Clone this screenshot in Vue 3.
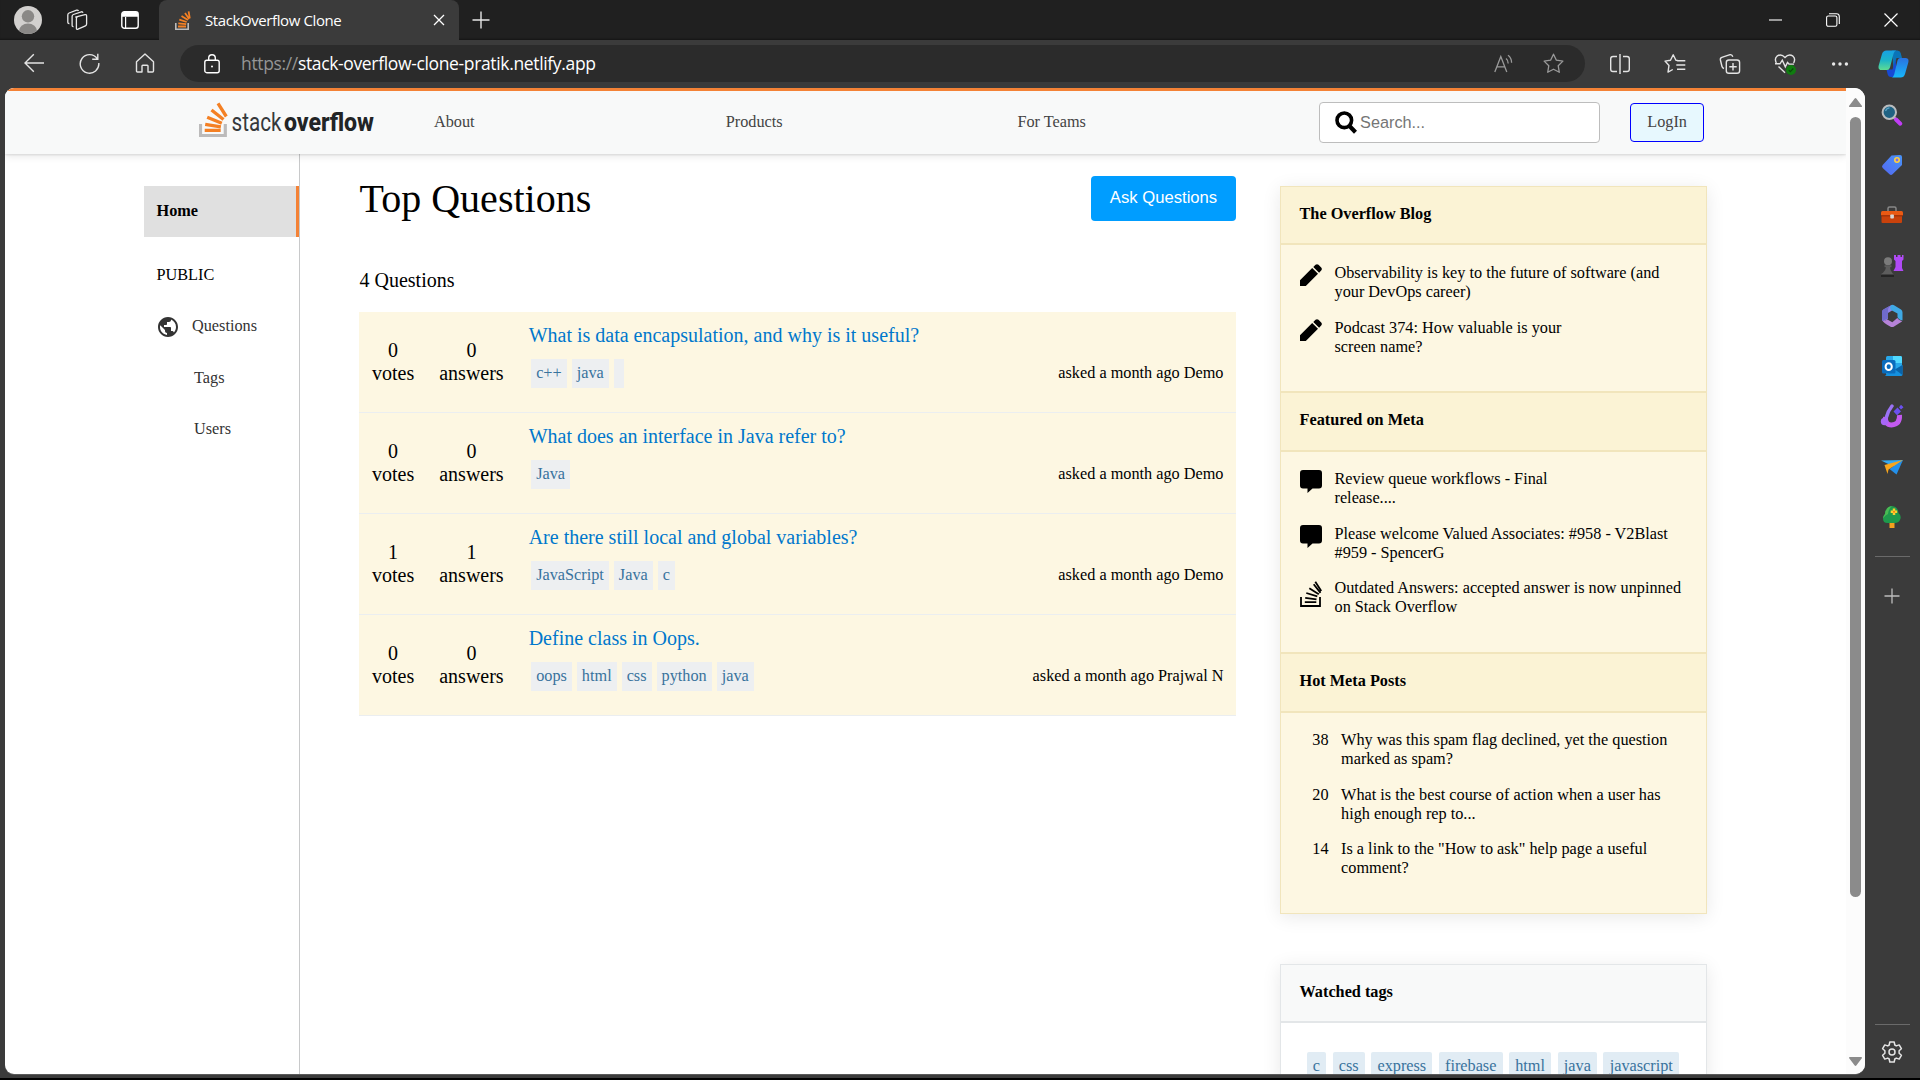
<script setup>
const navLinks = ['About', 'Products', 'For Teams']

const questions = [
  { votes: 0, answers: 0, title: 'What is data encapsulation, and why is it useful?', tags: ['c++', 'java', ''], by: 'Demo' },
  { votes: 0, answers: 0, title: 'What does an interface in Java refer to?', tags: ['Java'], by: 'Demo' },
  { votes: 1, answers: 1, title: 'Are there still local and global variables?', tags: ['JavaScript', 'Java', 'c'], by: 'Demo' },
  { votes: 0, answers: 0, title: 'Define class in Oops.', tags: ['oops', 'html', 'css', 'python', 'java'], by: 'Prajwal N' },
]

const widgets = [
  {
    title: 'The Overflow Blog',
    items: [
      { icon: 'pen', text: 'Observability is key to the future of software (and\nyour DevOps career)' },
      { icon: 'pen', text: 'Podcast 374: How valuable is your\nscreen name?' },
    ],
  },
  {
    title: 'Featured on Meta',
    items: [
      { icon: 'comment', text: 'Review queue workflows - Final\nrelease....' },
      { icon: 'comment', text: 'Please welcome Valued Associates: #958 - V2Blast\n#959 - SpencerG' },
      { icon: 'stack', text: 'Outdated Answers: accepted answer is now unpinned\non Stack Overflow' },
    ],
  },
  {
    title: 'Hot Meta Posts',
    items: [
      { count: 38, text: 'Why was this spam flag declined, yet the question\nmarked as spam?' },
      { count: 20, text: 'What is the best course of action when a user has\nhigh enough rep to...' },
      { count: 14, text: 'Is a link to the "How to ask" help page a useful\ncomment?' },
    ],
  },
]

const watched = ['c', 'css', 'express', 'firebase', 'html', 'java', 'javascript']
</script>

<template>
  <div class="browser">
    <header class="tabbar">
      <svg class="avatar" width="28" height="28" viewBox="0 0 28 28">
        <clipPath id="face"><circle cx="14" cy="14" r="14" /></clipPath>
        <g clip-path="url(#face)">
          <rect width="28" height="28" fill="#d2d0ce" />
          <circle cx="14" cy="10.3" r="6.2" fill="#8a8886" />
          <ellipse cx="14" cy="25" rx="9" ry="7.5" fill="#8a8886" />
        </g>
      </svg>
      <svg class="workspaces" width="22" height="22" viewBox="0 0 22 22" fill="none" stroke="#e8e8e8" stroke-width="1.3">
        <path d="M9.3 8.2 19 5.6q1.6-.3 1.6 1.3v8.2q0 1.200-1.200 1.700l-7.400 3.400q-1.600.6-1.600-1V9.800q0-1.200.9-1.600z" />
        <path d="M7.500 17.500q-1.400.3-1.400-1.300V7.500q0-1.500 1.300-2l7.900-2.700q1.300-.3 1.700 1" />
        <path d="M3.400 14.500q-1.600.2-1.600-1.400V6q0-1.400 1.300-2l7.500-2.800q1.300-.4 1.900.8" />
      </svg>
      <svg class="tabaction" width="18" height="18" viewBox="0 0 18 18" fill="none">
        <rect x=".8" y=".8" width="16.400" height="16.400" rx="2.500" stroke="#fff" stroke-width="1.400" />
        <path d="M1 5.800V3q0-2 2-2h12q2 0 2 2v2.800z" fill="#fff" />
        <path d="M4.600 6v11" stroke="#fff" stroke-width="1.200" />
      </svg>
      <div class="tab">
        <svg width="16" height="19" viewBox="0 0 16 19" fill="none">
          <path d="M.8 12v6.200h12.400V12" stroke="#bcbbbb" stroke-width="1.600" />
          <path d="M3 15.500h8M3.300 12.300l7.900.9M4.300 8.700l7.400 2.300M6.500 5l6.400 4M10 2l4.200 6M13.600.4l1.200 7" stroke="#f48024" stroke-width="1.800" />
        </svg>
        <span class="tab-title">StackOverflow Clone</span>
        <svg class="tab-close" width="12" height="12" viewBox="0 0 12 12"><path d="M1 1l10 10M11 1L1 11" stroke="#fff" stroke-width="1.300" /></svg>
      </div>
      <svg class="newtab" width="18" height="18" viewBox="0 0 18 18"><path d="M9 .5v17M.5 9h17" stroke="#e6e6e6" stroke-width="1.400" /></svg>
      <div class="window-buttons">
        <svg width="13" height="14" viewBox="0 0 13 14"><path d="M0 7h13" stroke="#fff" stroke-width="1.100" /></svg>
        <svg width="14" height="14" viewBox="0 0 14 14" fill="none" stroke="#fff" stroke-width="1.100"><rect x=".6" y="3" width="10.300" height="10.300" rx="1.600" /><path d="M3 .7h7.500q2.800 0 2.800 2.800v7.500" /></svg>
        <svg width="14" height="14" viewBox="0 0 14 14"><path d="M.5.500l13 13M13.500.500l-13 13" stroke="#fff" stroke-width="1.200" /></svg>
      </div>
    </header>

    <div class="toolbar">
      <svg width="20" height="20" viewBox="0 0 20 20" fill="none" stroke="#e4e4e4" stroke-width="1.400"><path d="M20 10H1M9.800 1.200 1 10l8.800 8.800" /></svg>
      <svg width="21" height="21" viewBox="0 0 21 21" fill="none" stroke="#e4e4e4" stroke-width="1.400"><path d="M18.300 5.800A9.300 9.300 0 1 0 19.800 10M18.800.8v5.400h-5.600" /></svg>
      <svg width="20" height="20" viewBox="0 0 20 20" fill="none" stroke="#e4e4e4" stroke-width="1.400" stroke-linejoin="round"><path d="M1.500 8.700 10 1l8.500 7.700V18q0 1-1 1H13v-6q0-.8-.8-.8H7.800q-.8 0-.8.800v6H2.500q-1 0-1-1z" /></svg>
      <div class="address">
        <svg width="16" height="20" viewBox="0 0 16 20" fill="none" stroke="#fff" stroke-width="1.400"><rect x=".8" y="6.300" width="14.400" height="12.400" rx="2" /><path d="M4.700 6V4a3.300 3.300 0 0 1 6.600 0v2" /><circle cx="8" cy="12.500" r="1" fill="#fff" stroke="none" /></svg>
        <span class="url"><span class="scheme">https://</span>stack-overflow-clone-pratik.netlify.app</span>
        <svg class="aloud" width="20" height="20" viewBox="0 0 20 20" fill="none" stroke="#9a9a9a" stroke-width="1.300"><path d="M.8 18 6.800 2.500 12.800 18M2.800 12.800h8M12 4.500q2.200 1.700 2.200 5M14 1.200q3.600 2.600 3.600 7.500" /></svg>
        <svg width="21" height="21" viewBox="0 0 21 21" fill="none" stroke="#9a9a9a" stroke-width="1.300" stroke-linejoin="round"><path d="M10.500 1.200l2.900 6 6.500.9-4.700 4.600 1.100 6.600-5.800-3.100-5.800 3.100 1.100-6.600L1.100 8.100l6.500-.9z" /></svg>
      </div>
      <div class="tools">
        <svg width="22" height="22" viewBox="0 0 22 22" fill="none" stroke="#e4e4e4" stroke-width="1.400"><path d="M8 3.500H4q-2.300 0-2.300 2.300v10.400q0 2.300 2.300 2.300h4M14 3.500h4q2.300 0 2.300 2.300v10.400q0 2.300-2.300 2.300h-4M11 1v20" /></svg>
        <svg width="22" height="22" viewBox="0 0 22 22" fill="none" stroke="#e4e4e4" stroke-width="1.400" stroke-linejoin="round"><path d="M14.200 7.600l-2.300-.4-2.700-5.400-2.700 5.400-5.500.9 4 4.300-1 6.700 4.800-2.600M13 7.700h8.300M12.300 12h9M13 16.300h8.300" /></svg>
        <svg width="22" height="22" viewBox="0 0 22 22" fill="none" stroke="#e4e4e4" stroke-width="1.400"><path d="M5 15.500Q3.400 15 3 13.500L1.400 7q-.4-2 1.400-2.600L11 1.700q2.100-.4 2.800 2" /><rect x="7.300" y="7" width="13.300" height="13.300" rx="2.600" /><path d="M14 10v7.400M10.300 13.700h7.400" /></svg>
        <svg width="22" height="22" viewBox="0 0 22 22" fill="none" stroke="#e4e4e4" stroke-width="1.400"><path d="M2.300 10Q.2 5.500 3 3.200q4.200-2.800 8 1.300 3.800-4.100 8-1.300 2.800 2.300.7 6.800M1 10.800h5l2.300-3.600 3 6.600 2.200-4.300 1.500 1.600h5M4.500 13.500l6.500 6.300" /><circle cx="17" cy="17" r="5" fill="#107c10" stroke="none" /><path d="M14.800 17.200l1.500 1.500 3-3.200" stroke="#0a4a0a" stroke-width="1.200" /></svg>
        <svg width="22" height="22" viewBox="0 0 22 22" fill="#e8e8e8"><circle cx="4.600" cy="11" r="1.700" /><circle cx="11" cy="11" r="1.700" /><circle cx="17.400" cy="11" r="1.700" /></svg>
      </div>
      <svg class="copilot" width="31" height="28" viewBox="0 0 31 28">
        <defs>
          <linearGradient id="cp1" x1="0" y1="0" x2="0" y2="1"><stop offset="0" stop-color="#18a0e4" /><stop offset=".5" stop-color="#1cb4c8" /><stop offset="1" stop-color="#5edc92" /></linearGradient>
          <linearGradient id="cp2" x1="0" y1="0" x2="0" y2="1"><stop offset="0" stop-color="#2a72e0" /><stop offset="1" stop-color="#17b7fb" /></linearGradient>
        </defs>
        <path d="M14 .5h5.500q2.500 0 3.200 2.500l1.300 5h-5.500l-3 11.500z" fill="#0a74b8" />
        <path d="M8.500 19.500h6l3-10L19 27h-6q-2.600 0-3.300-2.500z" fill="#1749d4" />
        <path d="M8.500.5h9.800q-2 .5-2.700 3L12 17.500q-.8 2.500-3 2.500H3.500Q-.3 20 .7 15.500L4 4Q5 .5 8.500.5z" fill="url(#cp1)" />
        <path d="M22 8h5.500q3.800 0 2.800 4.500L27 24q-1 3.500-4.500 3.500h-9q2-.5 2.700-3L19.500 10.500Q20.200 8 22 8z" fill="url(#cp2)" />
      </svg>
    </div>

    <div class="middle">
      <div class="viewport">
        <div class="site">
          <nav class="nav">
            <svg class="logo" width="180" height="38" viewBox="0 0 180 38">
              <path d="M1.500 23v11.500h24.800V23" fill="none" stroke="#bcbbbb" stroke-width="3.200" />
              <path d="M5.700 29.300h16M6.200 23.300l15.700 2.500M8.200 16.200l14.600 6.100M12.500 9l12 9.500M19 2.300l8.300 13.200" fill="none" stroke="#f48024" stroke-width="3.300" />
              <text x="32.500" y="30" class="word" textLength="50" lengthAdjust="spacingAndGlyphs">stack</text>
              <text x="85" y="30" class="word strong" textLength="90" lengthAdjust="spacingAndGlyphs">overflow</text>
            </svg>
            <div class="links"><a v-for="l in navLinks" :key="l">{{ l }}</a></div>
            <div class="search">
              <svg width="22" height="23" viewBox="0 0 22 23" fill="none" stroke="#000"><circle cx="9.300" cy="9.300" r="7.300" stroke-width="3.600" /><path d="M14.500 15l6 6.200" stroke-width="4.200" /></svg>
              <span>Search...</span>
            </div>
            <a class="login">LogIn</a>
          </nav>

          <div class="body">
            <aside class="left">
              <a class="home">Home</a>
              <span class="public">PUBLIC</span>
              <a class="side-link with-icon">
                <svg width="24" height="24" viewBox="0 0 24 24" fill="#333"><path d="M12 2C6.480 2 2 6.480 2 12s4.480 10 10 10 10-4.480 10-10S17.520 2 12 2zm-1 17.930c-3.950-.49-7-3.850-7-7.930 0-.62.08-1.210.21-1.790L9 15v1c0 1.100.9 2 2 2v1.930zm6.900-2.540c-.26-.81-1-1.390-1.900-1.390h-1v-3c0-.55-.45-1-1-1H8v-2h2c.55 0 1-.45 1-1V7h2c1.100 0 2-.9 2-2v-.41c2.930 1.190 5 4.060 5 7.410 0 2.080-.8 3.970-2.100 5.390z" /></svg>
                Questions
              </a>
              <a class="side-link">Tags</a>
              <a class="side-link">Users</a>
            </aside>

            <main class="main">
              <div class="heading">
                <h1>Top Questions</h1>
                <button>Ask Questions</button>
              </div>
              <p class="count">4 Questions</p>
              <div class="list">
                <article v-for="q in questions" :key="q.title" class="question">
                  <div class="stat"><span>{{ q.votes }}</span><span>votes</span></div>
                  <div class="stat"><span>{{ q.answers }}</span><span>answers</span></div>
                  <div class="details">
                    <a class="title">{{ q.title }}</a>
                    <div class="meta">
                      <div class="tags"><span v-for="(t, i) in q.tags" :key="i" class="tag">{{ t }}</span></div>
                      <span class="asked">asked a month ago {{ q.by }}</span>
                    </div>
                  </div>
                </article>
              </div>
            </main>

            <aside class="right">
              <section class="widget">
                <template v-for="w in widgets" :key="w.title">
                  <h4>{{ w.title }}</h4>
                  <div class="items">
                    <div v-for="it in w.items" :key="it.text" class="item" :class="{ hot: it.count }">
                      <svg v-if="it.icon === 'pen'" width="22" height="22" viewBox="0 0 22 22"><path d="M0 22v-5.800L12.200 4l5.800 5.800L5.800 22zM13.300 2.900 15.500.8q1.500-1.300 3 0l2.700 2.700q1.300 1.500 0 3L19.100 8.700z" /></svg>
                      <svg v-else-if="it.icon === 'comment'" width="22" height="23" viewBox="0 0 22 23"><path d="M3 0h16q3 0 3 3v12.500q0 3-3 3h-6.500L7.500 23v-4.500H3q-3 0-3-3V3q0-3 3-3z" /></svg>
                      <svg v-else-if="it.icon === 'stack'" class="stack" width="22" height="26" viewBox="0 0 22 26" fill="none" stroke="#000" stroke-width="1.800"><path d="M1 16v9h19v-9M4.800 21.200h11.500M5.200 16.800l11.300 1.500M6.300 12l11 3.300M9.300 7.200l9.500 6M13.700 3.200l6.800 8.700M15.300.7l6 9.300" /></svg>
                      <span v-else class="num">{{ it.count }}</span>
                      <p>{{ it.text }}</p>
                    </div>
                  </div>
                </template>
              </section>
              <section class="widget watched">
                <h4>Watched tags</h4>
                <div class="watched-tags"><span v-for="t in watched" :key="t">{{ t }}</span></div>
              </section>
            </aside>
          </div>
        </div>
        <div class="scrollbar">
          <svg width="13" height="9" viewBox="0 0 13 9"><path d="M6.500 0q.5 0 1 .8L13 8q.2 1-1 1H1Q-.2 9 0 8L5.500.8q.5-.8 1-.8z" fill="#8b8b8b" /></svg>
          <div class="thumb"></div>
          <svg width="13" height="9" viewBox="0 0 13 9"><path d="M6.500 9q.5 0 1-.8L13 1q.2-1-1-1H1Q-.2 0 0 1l5.500 7.200q.5.8 1 .8z" fill="#8b8b8b" /></svg>
        </div>
      </div>

      <div class="edgebar">
        <svg width="24" height="24" viewBox="0 0 24 24"><path d="M13.500 14l4 4" stroke="#aaa" stroke-width="3" /><circle cx="9.300" cy="9.300" r="6.700" fill="#1f6283" stroke="#b9bcbf" stroke-width="2" /><path d="M5.500 8q1-3 4-3.200" stroke="#5ba3c5" fill="none" stroke-width="1.300" /><path d="M16 16.500l4.300 4.200" stroke="#c03cf5" stroke-width="4" stroke-linecap="round" /></svg>
        <svg width="24" height="24" viewBox="0 0 24 24"><defs><linearGradient id="tg" x1="1" y1="0" x2="0" y2="1"><stop offset="0" stop-color="#4894f8" /><stop offset="1" stop-color="#5468f0" /></linearGradient></defs><path d="M11.500 2.500 20 2q2 0 2 2v8l-9.500 9.300q-1.500 1.300-3 0L2.700 15q-1.400-1.500 0-3z" fill="url(#tg)" /><circle cx="17" cy="7" r="2.200" fill="#7b6cf0" stroke="#ffd23c" stroke-width="1.600" /></svg>
        <svg width="24" height="24" viewBox="0 0 24 24"><path d="M8 8V5.500Q8 4 9.500 4h5Q16 4 16 5.500V8" stroke="#888" stroke-width="1.500" fill="none" /><rect x="1.500" y="10" width="20.500" height="10" rx="1" fill="#c9420c" /><path d="M2.500 8h19q1.500 0 1.500 1.500v3.300H1V9.500Q1 8 2.500 8z" fill="#ea5a14" /><path d="M1 12.800h22" stroke="#8d2a06" /><rect x="10.300" y="11.500" width="3.600" height="4" rx=".8" fill="#d7d7d7" /></svg>
        <svg width="24" height="24" viewBox="0 0 24 24"><path d="M14 2h2v2h1.500V2h3v2H22V2h1.500v4.500L22 8v7l1.500 3H13.500L15.500 14V8L14 6.500z" fill="#b04af5" /><circle cx="8" cy="8.300" r="4" fill="#7b7b7b" /><path d="M4.500 12.200h7v2H10q0 3 2.500 6l1.500 1v2.300H1V21l1.800-1Q5.700 17.500 6 14.200H4.500z" fill="#5d5d5d" /><path d="M1 21.500h13V24H1z" fill="#242424" /></svg>
        <svg width="24" height="24" viewBox="0 0 24 24"><path d="M11.500 1 3.500 5.500Q2 6.500 2 8.500v8q4 1.500 6-2V9l6.500-4z" fill="#8f82e6" /><path d="M11.500 1q1.500-.5 3 .5l6.500 4q1.500 1 1.500 3v8q-4-1-5-3.500V9.500L11 6q-2-3 .5-5z" fill="#3fa9e5" /><path d="M2.300 16.500q2 1 5-1l5 2.800 5-4.300q1 2 4.800 3.300-1 1-8 5.200-2 1-4 0Q3.500 19 2.300 16.500z" fill="#b683d9" /><path d="M11.500 1Q8 3 8 6.500v8L2.300 17Q1.800 14 2 8q0-2 1.700-2.800z" fill="#6f6bcb" /></svg>
        <svg width="24" height="24" viewBox="0 0 24 24"><rect x="6" y="2" width="16" height="19" rx="1.500" fill="#28a8ea" /><path d="M13 2h7.500Q22 2 22 3.500V9h-9z" fill="#50d9ff" /><path d="M5 21.500 22.500 11v9.500q0 1.500-1.500 1.500H6z" fill="#1490df" /><path d="M22.500 11v10L15 15.500z" fill="#0a63a8" /><rect x="2" y="6" width="13.500" height="13.500" rx="1.500" fill="#0a6cbd" /><ellipse cx="8.700" cy="12.700" rx="3.100" ry="3.400" fill="none" stroke="#fff" stroke-width="2" /></svg>
        <svg width="24" height="24" viewBox="0 0 24 24"><path d="M5.500 13q-.5 8 6 8 8.500-.5 8-10" fill="none" stroke="#c45af0" stroke-width="5" /><path d="M6.500 13Q8 7 12 2" stroke="#9a72f5" stroke-width="3.500" stroke-linecap="round" fill="none" /><circle cx="4.500" cy="17.500" r="3.700" fill="#a866f7" /><path d="M17.500 3.500 21 7.500l-4 3.700-3.500-3.700zM21 .8l2.500 2.400L21 5.500l-2-2.300z" fill="#6b50ef" /></svg>
        <svg width="24" height="24" viewBox="0 0 24 24"><path d="M1 5.500 23 5l-8.500 7z" fill="#35a9f0" /><path d="M23 5l-6.500 14.500-7-5.500z" fill="#2490ea" /><path d="M4.500 10 23 5 8.500 14.500 7.500 19z" fill="#f7a51c" /></svg>
        <svg width="24" height="24" viewBox="0 0 24 24"><path d="M9.500 17h5v6h-5z" fill="#f3a11e" /><path d="M12 1q6 .5 6.500 7 3.500 3 1.500 7-1.500 3-5 3H7.500Q3 18 3 13.500q0-2.500 2-4.500Q5.500 2 12 1z" fill="#1e9a4c" /><path d="M12 1Q5.500 2 5 9q-2 2-2 4.500Q5 10 8 9q.5-5 4-8z" fill="#4abb54" /><path d="M14 3.500v6.500M10.700 6.700h6.500" stroke="#ffcf2e" stroke-width="2.500" /><circle cx="14" cy="6.700" r="1" fill="#f27b12" /></svg>
        <i class="rule"></i>
        <svg class="plus" width="16" height="16" viewBox="0 0 16 16"><path d="M8 .5v15M.5 8h15" stroke="#bdbdbd" stroke-width="1.300" /></svg>
        <i class="rule low"></i>
        <svg class="gear" width="22" height="22" viewBox="0 0 22 22" fill="none" stroke="#e4e4e4" stroke-width="1.500" stroke-linejoin="round"><circle cx="11" cy="11" r="3" /><path d="M8.800 1h4.400l.6 3 1.500.9 2.900-1 2.200 3.800-2.300 2v2.600l2.300 2-2.200 3.800-2.900-1-1.500.9-.6 3H8.800l-.6-3-1.500-.9-2.900 1-2.200-3.800 2.300-2V9.700l-2.300-2 2.200-3.800 2.900 1 1.500-.9z" /></svg>
      </div>
    </div>
    <div class="taskedge"></div>
  </div>
</template>

<style>
html,
body {
  margin: 0;
  overflow: hidden;
  background: #000;
}
</style>

<style scoped>
* {
  box-sizing: border-box;
}
svg {
  display: block;
  flex: none;
}
h1,
h4,
p {
  margin: 0;
}
.browser {
  width: 1920px;
  height: 1080px;
  display: flex;
  flex-direction: column;
  background: #3b3b3b;
  font-family: "Liberation Serif", "Times New Roman", serif;
  overflow: hidden;
}
.tabbar {
  height: 40px;
  flex: none;
  display: flex;
  align-items: center;
  background: #202020;
  padding-left: 14px;
  box-shadow: inset 0 -2px 2px -1px #151515;
}
.workspaces {
  margin-left: 24px;
}
.tabaction {
  margin-left: 33px;
}
.tab {
  width: 300px;
  height: 40px;
  margin-left: 20px;
  padding: 0 14px 0 16px;
  display: flex;
  align-items: center;
  background: #3b3b3b;
  border-radius: 8px 8px 0 0;
}
.tab-title {
  margin-left: 14px;
  flex: 1;
  white-space: nowrap;
  font: 15px/20px "Open Sans", "Noto Sans", sans-serif;
  letter-spacing: -0.400px;
  color: #fff;
}
.newtab {
  margin-left: 13px;
}
.window-buttons {
  margin-left: auto;
  margin-right: 22px;
  display: flex;
  gap: 44px;
}
.toolbar {
  height: 48px;
  flex: none;
  display: flex;
  align-items: flex-start;
  padding-left: 24px;
}
.toolbar > svg {
  margin-top: 13px;
  margin-right: 35px;
}
.toolbar > svg:nth-child(3) {
  margin-right: 25px;
}
.address {
  width: 1405px;
  height: 37px;
  margin-top: 5px;
  padding: 0 21px 0 24px;
  border-radius: 19px;
  background: #2b2b2b;
  display: flex;
  align-items: center;
}
.url {
  margin: 0 0 2px 21px;
  flex: 1;
  font: 17.5px/24px "Open Sans", "Noto Sans", sans-serif;
  letter-spacing: -0.35px;
  color: #fff;
}
.scheme {
  color: #959595;
}
.aloud {
  margin-right: 29px;
}
.tools {
  display: flex;
  gap: 33px;
  margin: 13px 0 0 23.500px;
}
.toolbar > .copilot {
  margin: 10px 0 0 27px;
}
.middle {
  height: 990px;
  flex: none;
  display: flex;
  padding-left: 5px;
}
.viewport {
  width: 1860px;
  height: 986px;
  display: flex;
  background: #fff;
  border-radius: 9px 11px 10px 9px;
  overflow: hidden;
  box-shadow: 0 1px 0 #5a5a5a;
}
.site {
  width: 1841px;
  height: 986px;
  display: flex;
  flex-direction: column;
  overflow: hidden;
}
.nav {
  height: 66px;
  flex: none;
  position: relative;
  display: flex;
  align-items: flex-start;
  border-top: 3px solid #f48236;
  background: #f8f9f9;
  box-shadow: 0 1px 2px rgba(0, 0, 0, 0.1), 0 2px 8px rgba(0, 0, 0, 0.1);
  color: #525960;
  font-size: 16.25px;
}
.logo {
  margin: 10px -4px 0 194px;
}
.word {
  font: 400 25px Roboto, "Open Sans", sans-serif;
  fill: #35383b;
}
.strong {
  font-weight: 800;
  fill: #222426;
}
.links {
  display: flex;
  margin: 22px 0 0 59px;
  color: #444;
}
.links a {
  width: 291.700px;
  line-height: 19px;
}
.search {
  width: 281px;
  height: 41px;
  margin: 11px 0 0 10px;
  padding-left: 15px;
  display: flex;
  align-items: center;
  gap: 3px;
  border: 1px solid #bdbdbd;
  border-radius: 4px;
  background: #fff;
  font: 16.250px/20px "Liberation Sans", Arial, sans-serif;
  color: #757575;
}
.search span {
  margin-bottom: 2px;
}
.login {
  width: 74px;
  height: 39px;
  margin: 12px 0 0 30px;
  border: 1px solid #0000ff;
  border-radius: 4px;
  background: #e7f8fe;
  color: #444;
  line-height: 37px;
  text-align: center;
}
.body {
  flex: 1;
  display: flex;
  align-items: flex-start;
}
.left {
  width: 295px;
  height: 920px;
  flex: none;
  padding: 32px 0 0 139px;
  border-right: 1px solid #c8c9ca;
  display: flex;
  flex-direction: column;
  font-size: 16.250px;
  line-height: 19px;
}
.home {
  height: 51px;
  padding: 16px 0 0 12.500px;
  background: #e0e0e0;
  border-right: 3px solid #f48236;
  font-weight: 700;
}
.public {
  margin: 29px 0 32px 12.500px;
}
.side-link {
  height: 19px;
  margin: 0 0 32.500px 50px;
  color: #333;
}
.with-icon {
  display: flex;
  gap: 12px;
  margin-left: 12px;
}
.with-icon svg {
  margin-top: -2px;
}
.main {
  width: 877px;
  flex: none;
  margin: 22px 44px 0 59px;
}
.heading {
  display: flex;
  justify-content: space-between;
}
h1 {
  padding-left: 0.600px;
  font-size: 40px;
  font-weight: 400;
  line-height: 45px;
}
button {
  width: 145px;
  height: 45px;
  padding: 0 0 2px;
  border: 0;
  border-radius: 4px;
  background: #009dff;
  color: #fff;
  font: 16.670px "Liberation Sans", Arial, sans-serif;
}
.count {
  margin: 48px 0 20px;
  padding-left: 0.500px;
  font-size: 20px;
  line-height: 23px;
}
.question {
  height: 101px;
  display: flex;
  align-items: flex-start;
  padding: 0 12.500px 0 13px;
  background: #fdf7e2;
  border-bottom: 1px solid #ebeef0;
  font-size: 20px;
}
.stat {
  display: flex;
  flex-direction: column;
  align-items: center;
  margin: 27px 25px 0 0;
  line-height: 23px;
}
.details {
  flex: 1;
}
.title {
  display: block;
  margin-top: 12px;
  color: #0077cc;
  line-height: 23px;
}
.meta {
  display: flex;
  justify-content: space-between;
  margin-top: 12px;
  font-size: 16.250px;
  line-height: 19px;
}
.tags {
  display: flex;
}
.tag {
  height: 29px;
  margin: 0 2.500px;
  padding: 5px 5px 0;
  background: #edeff1;
  color: #39739d;
}
.asked {
  margin-top: 5px;
}
.right {
  width: 427px;
  flex: none;
  margin-top: 32px;
}
.widget {
  border: 1px solid #f1e5bc;
  background: #fdf7e2;
  box-shadow: 0 3px 18px rgba(0, 0, 0, 0.09);
  font-size: 16.250px;
  line-height: 19px;
}
h4 {
  height: 58.400px;
  padding: 18px 0 0 18.500px;
  border-bottom: 2px solid #f1e5bc;
  background: #fbf3d5;
  font-size: 16.250px;
}
.items {
  display: flex;
  flex-direction: column;
  gap: 16.500px;
  padding: 18.700px 0 34.800px 19px;
}
.items:not(:last-child) {
  border-bottom: 2px solid #f1e5bc;
}
.item {
  display: flex;
  gap: 12.500px;
}
.item .stack {
  margin-top: 1.500px;
}
.item p {
  height: 38px;
  white-space: pre;
}
.item.hot {
  padding-left: 12.300px;
}
.watched {
  margin-top: 49.500px;
  border-color: #e3e6e8;
  background: #fff;
}
.watched h4 {
  height: 58.500px;
  background: #f8f9f9;
  border-color: #e3e6e8;
}
.watched-tags {
  display: flex;
  gap: 6.300px;
  padding: 28.500px 0 0 25.500px;
}
.watched-tags span {
  height: 31px;
  padding: 5.500px 6.250px 0;
  border-radius: 2px;
  background: #e1ecf4;
  color: #39739d;
}
.scrollbar {
  width: 19px;
  height: 986px;
  flex: none;
  display: flex;
  flex-direction: column;
  align-items: center;
  padding: 10px 0 8px;
  background: #fcfcfc;
}
.thumb {
  width: 11px;
  height: 780px;
  margin: 10px 0 auto;
  border-radius: 6px;
  background: #8b8b8b;
}
.edgebar {
  width: 55px;
  display: flex;
  flex-direction: column;
  align-items: center;
  padding: 14.500px 1px 0 0;
  gap: 26.300px;
}
.rule {
  width: 35px;
  height: 1px;
  flex: none;
  margin-top: 1px;
  background: #6a6a6a;
}
.plus {
  margin-top: 5px;
}
.low {
  margin-top: 393px;
}
.gear {
  margin-top: -10px;
}
.taskedge {
  height: 2px;
  background: #000;
}
</style>
